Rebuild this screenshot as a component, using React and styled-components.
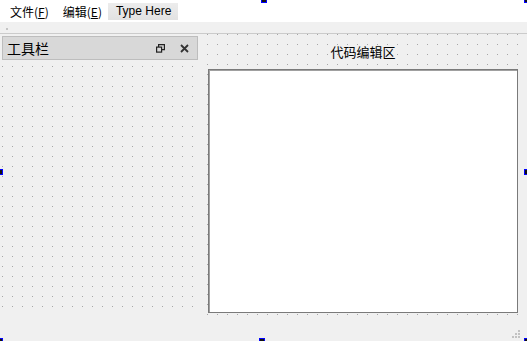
import styled, { createGlobalStyle } from 'styled-components';

const Global = createGlobalStyle`
  html, body { margin: 0; padding: 0; background: #f0f0f0; }
  body { font-family: "Noto Sans CJK SC", "Noto Sans", "Liberation Sans", sans-serif; font-size: 13px; color: #000; }
  *, *::before, *::after { box-sizing: border-box; }
`;

const dots = (color) => `
  background-color: #f0f0f0;
  background-image:
    linear-gradient(90deg, #f0f0f0 9px, transparent 1px),
    linear-gradient(#f0f0f0 9px, ${color} 1px);
  background-size: 10px 10px;
`;

const Form = styled.div`
  position: relative;
  width: 527px;
  height: 341px;
  overflow: hidden;
  display: flex;
  flex-direction: column;
  background: #f0f0f0;
`;

const MenuBar = styled.div`
  flex-shrink: 0;
  height: 22px;
  background: #fff;
  display: flex;
  align-items: center;
  padding-left: 10px;
  gap: 14px;
  font-size: 12px;
`;

const MenuItem = styled.div`
  line-height: 17px;
  height: 17px;
  padding: ${(p) => (p.$placeholder ? '0 7px 0 8px' : '0')};
  background: ${(p) => (p.$placeholder ? 'linear-gradient(#ececec, #e2e2e2)' : 'transparent')};
  margin-left: ${(p) => (p.$placeholder ? '-8px' : '0')};
  font-family: ${(p) => (p.$placeholder ? '"Liberation Sans", sans-serif' : 'inherit')};
`;

const Mn = styled.span`
  text-decoration: underline;
`;

const ToolStrip = styled.div`
  flex-shrink: 0;
  height: 12px;
  border-bottom: 1px solid #cbcbcb;
  position: relative;
  &::before {
    content: '';
    position: absolute;
    left: 6px;
    top: 6px;
    width: 2px;
    height: 2px;
    background: #c4c4c4;
  }
`;

const Main = styled.div`
  flex: 1;
  display: flex;
`;

const Dock = styled.div`
  width: 198px;
  padding: 2px 0 0 2px;
  ${dots('#a6a6a6')}
  background-position: -7px 3px;
`;

const DockTitle = styled.div`
  height: 24px;
  width: 196px;
  background: #d8d8d8;
  border: 1px solid #bdbdbd;
  display: flex;
  align-items: center;
  padding: 0 6px 0 4px;
  font-size: 14px;
`;

const DockLabel = styled.span`
  flex: 1;
`;

const DockButton = styled.span`
  width: 14px;
  height: 14px;
  display: flex;
  align-items: center;
  justify-content: center;
  margin-left: 10px;
`;

const Central = styled.div`
  flex: 1;
  display: flex;
  flex-direction: column;
  padding: 0 9px 2px 10px;
  ${dots('#a6a6a6')}
  background-position: 0px 1px;
`;

const EditorLabel = styled.div`
  text-align: center;
  height: 35px;
  line-height: 20px;
  padding-top: 8px;
`;

const Editor = styled.div`
  flex: 1;
  background: #fff;
  border: 1px solid #7a7a7a;
  box-shadow: inset 1px 1px 0 #a0a0a0;
`;

const StatusBar = styled.div`
  flex-shrink: 0;
  height: 26px;
  display: flex;
  justify-content: flex-end;
  align-items: flex-end;
  padding: 0 6px 2px 0;
`;

const Handle = styled.div`
  position: absolute;
  width: 6px;
  height: 6px;
  background: #111;
  border: 1px solid #0000ff;
  left: ${(p) => p.$x}px;
  top: ${(p) => p.$y}px;
`;

const handles = [
  [261, -3], [524, -3], [-3, 169], [524, 169], [259, 338], [-3, 338], [524, 338],
];

function Grip() {
  const pts = [[6, 0], [3, 3], [6, 3], [0, 6], [3, 6], [6, 6]];
  return (
    <svg width="9" height="9" viewBox="0 0 9 9" style={{ display: 'block' }}>
      {pts.map(([x, y]) => (
        <rect key={`${x}-${y}`} x={x} y={y} width="2" height="2" fill="#c2c2c2" />
      ))}
    </svg>
  );
}

export default function App() {
  return (
    <>
      <Global />
      <Form>
        <MenuBar>
          <MenuItem>文件(<Mn>F</Mn>)</MenuItem>
          <MenuItem>编辑(<Mn>E</Mn>)</MenuItem>
          <MenuItem $placeholder>Type Here</MenuItem>
        </MenuBar>
        <ToolStrip />
        <Main>
          <Dock>
            <DockTitle>
              <DockLabel>工具栏</DockLabel>
              <DockButton>
                <svg width="9" height="9" viewBox="0 0 9 9" fill="none" stroke="#222" strokeWidth="1.2">
                  <rect x="0.6" y="3.1" width="5" height="5" />
                  <path d="M2.6 3.1V0.6h5.8v5h-2.8" />
                </svg>
              </DockButton>
              <DockButton>
                <svg width="9" height="9" viewBox="0 0 9 9" stroke="#333" strokeWidth="1.8">
                  <path d="M1 1l7 7M8 1L1 8" />
                </svg>
              </DockButton>
            </DockTitle>
          </Dock>
          <Central>
            <EditorLabel>代码编辑区</EditorLabel>
            <Editor />
          </Central>
        </Main>
        <StatusBar>
          <Grip />
        </StatusBar>
        {handles.map(([x, y]) => (
          <Handle key={`${x}-${y}`} $x={x} $y={y} />
        ))}
      </Form>
    </>
  );
}
